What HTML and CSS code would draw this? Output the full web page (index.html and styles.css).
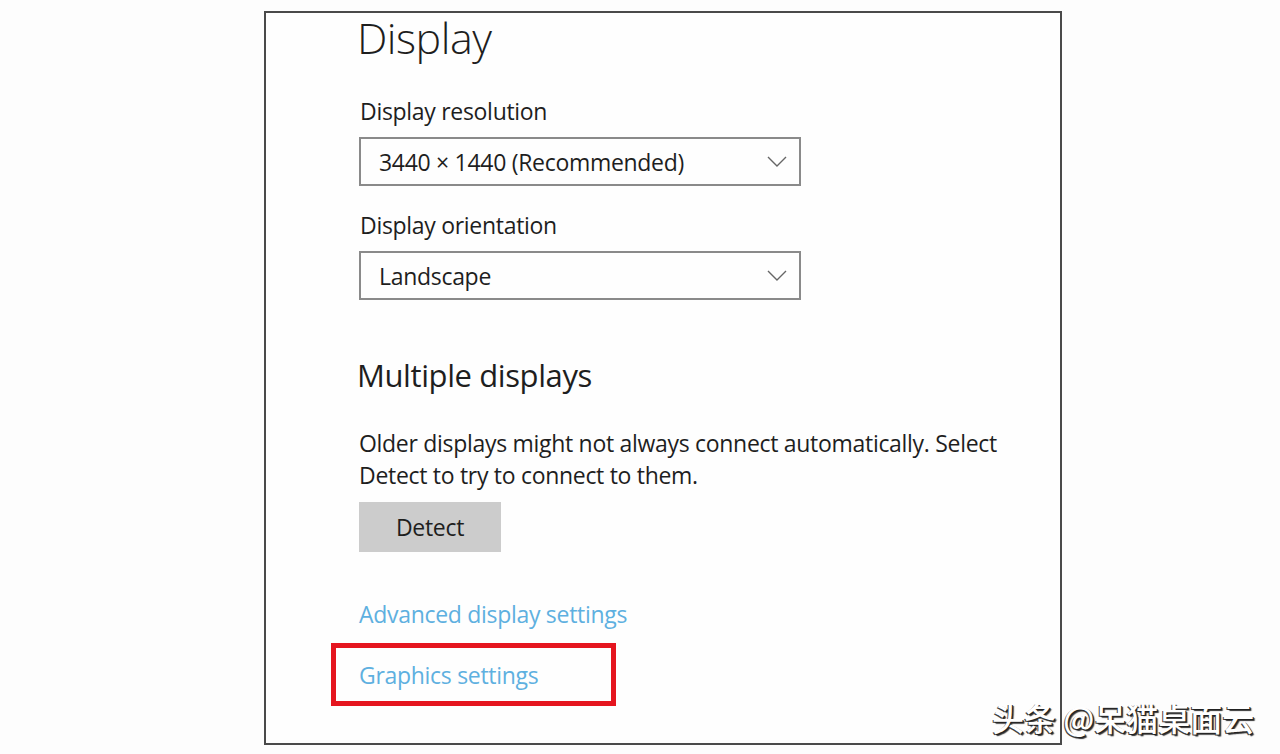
FILE: index.html
```html
<!DOCTYPE html>
<html lang="en">
<head>
<meta charset="utf-8">
<title>Display</title>
<link rel="stylesheet" href="styles.css">
</head>
<body>
<div class="frame">
  <div class="content">
    <h1 class="title">Display</h1>
    <div class="label">Display resolution</div>
    <div class="select">
      <span>3440 × 1440 (Recommended)</span>
      <svg class="chev" width="20" height="12" viewBox="0 0 20 12"><path d="M1 1 L10 10 L19 1" fill="none" stroke="#666" stroke-width="1.4"/></svg>
    </div>
    <div class="label">Display orientation</div>
    <div class="select">
      <span>Landscape</span>
      <svg class="chev" width="20" height="12" viewBox="0 0 20 12"><path d="M1 1 L10 10 L19 1" fill="none" stroke="#666" stroke-width="1.4"/></svg>
    </div>
    <h2 class="subtitle">Multiple displays</h2>
    <p class="desc">Older displays might not always connect automatically. Select Detect to try to connect to them.</p>
    <div class="btn">Detect</div>
    <div class="link adv">Advanced display settings</div>
    <div class="highlight"><span class="link">Graphics settings</span></div>
  </div>
</div>
<div class="watermark">头条 @呆猫桌面云</div>
</body>
</html>
```

FILE: styles.css
```css
html, body {
  margin: 0;
  padding: 0;
  background: #fdfdfd;
}
body {
  width: 1280px;
  height: 754px;
  position: relative;
  overflow: hidden;
  font-family: "Open Sans", "Noto Sans", sans-serif;
  color: #1e1e1e;
}
.frame {
  margin-left: 264px;
  margin-top: 11px;
  width: 794px;
  height: 730px;
  border: 2px solid #4a4a4a;
  background: #fefefe;
}
.content {
  padding-left: 91px;
  display: flex;
  flex-direction: column;
  align-items: flex-start;
}
.title {
  margin: 0;
  font-size: 43px;
  font-weight: 300;
  line-height: 50px;
  letter-spacing: -0.5px;
}
.label {
  font-size: 23px;
  line-height: 28px;
  margin-left: 3px;
  letter-spacing: -0.3px;
}
.title + .label { margin-top: 34px; }
.select {
  box-sizing: border-box;
  width: 442px;
  height: 49px;
  border: 2px solid #8a8a8a;
  margin-left: 2px;
  margin-top: 12px;
  margin-bottom: 25px;
  display: flex;
  align-items: center;
  justify-content: space-between;
  padding: 0 12px 0 18px;
  font-size: 23px;
  letter-spacing: -0.3px;
}
.chev { display: block; }
.subtitle {
  margin: 0;
  margin-top: 30px;
  font-size: 31px;
  font-weight: 400;
  line-height: 40px;
  letter-spacing: -0.4px;
}
.desc {
  margin: 32px 0 0 2px;
  font-size: 23px;
  line-height: 32px;
  width: 660px;
  letter-spacing: -0.3px;
}
.btn {
  margin-top: 11px;
  margin-left: 2px;
  width: 142px;
  height: 50px;
  background: #cccccc;
  display: flex;
  align-items: center;
  justify-content: center;
  font-size: 23px;
  letter-spacing: -0.3px;
}
.link {
  color: #5eb0e0;
  font-size: 23px;
  letter-spacing: -0.3px;
}
.adv {
  margin-top: 48px;
  margin-left: 2px;
  line-height: 28px;
}
.highlight {
  margin-top: 15px;
  margin-left: -26px;
  box-sizing: border-box;
  width: 285px;
  height: 63px;
  border: 5px solid #e5151f;
  display: flex;
  align-items: center;
  padding-left: 23px;
}
.watermark {
  position: absolute;
  left: 992px;
  top: 694px;
  font-family: "Noto Sans CJK SC", sans-serif;
  font-size: 32px;
  font-weight: 500;
  color: #ffffff;
  letter-spacing: 0px;
  text-shadow: 1px 1px 0 #222, -1px 1px 0 #444, 2px 2px 1px #333;
}
```
